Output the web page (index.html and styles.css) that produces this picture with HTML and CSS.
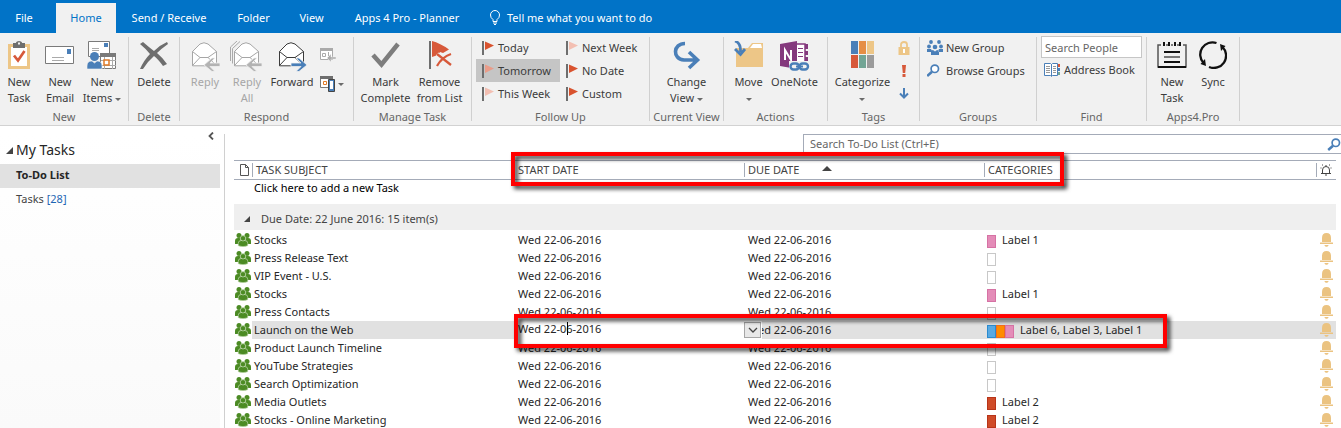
FILE: index.html
```html
<!DOCTYPE html>
<html lang="en">
<head>
<meta charset="utf-8">
<title>Tasks - To-Do List</title>
<link rel="stylesheet" href="styles.css">
</head>
<body>
<svg class="defs" aria-hidden="true">
  <symbol id="people" viewBox="0 0 16 14">
    <g fill="#4c8b24">
      <circle cx="4" cy="2.6" r="2.5"/><circle cx="12" cy="2.6" r="2.5"/>
      <path d="M0 11V8q0-3 3-3h2l2 6zM16 11V8q0-3-3-3h-2l-2 6z"/>
    </g>
    <g fill="#4c8b24" stroke="#d4e6c8" stroke-width=".6">
      <path d="M3.200 12.800V10.500q0-3 3-3h3.600q3 0 3 3v2.300q-4.800 1.800-9.600 0z"/><circle cx="8" cy="5.300" r="2.700"/>
    </g>
  </symbol>
  <symbol id="bell" viewBox="0 0 14 14">
    <path fill="#ebc381" d="M2 9V5Q2 0 6.500 0T11 5v4zM0 9.500h13V11H0zM4.500 12h4v.6L7.300 13.800H5.700L4.500 12.600z"/>
  </symbol>
  <symbol id="flag" viewBox="0 0 12 14">
    <path fill="#6e6e6e" d="M0 0h2v14H0z"/><path fill="currentColor" d="M3 0.500 12 4.600 3 9z"/>
  </symbol>
  <symbol id="glass" viewBox="0 0 14 13">
    <circle cx="8.800" cy="4.800" r="3.700" fill="#fff" stroke="#4a7fb8" stroke-width="1.700"/><path d="M6 7.700 1.200 12" stroke="#4a7fb8" stroke-width="2.500"/>
  </symbol>
  <symbol id="envelope" viewBox="0 0 30 32">
    <path class="paper" stroke="currentColor" d="M2.500 10.500 10 3Q14 .5 18 3l8.500 7.500v14.300H2.500z"/>
    <path fill="none" stroke="currentColor" d="M2.500 10.500 10 16.500h8l8.500-6M2.500 24.500 10 16.500M18 16.500l8.500 8"/>
  </symbol>
</svg>

<nav class="tabs">
  <button class="tab tab-file">File</button>
  <button class="tab tab-home active">Home</button>
  <button class="tab tab-send">Send / Receive</button>
  <button class="tab tab-folder">Folder</button>
  <button class="tab tab-view">View</button>
  <button class="tab tab-apps">Apps 4 Pro - Planner</button>
  <button class="tab tell">
    <svg width="12" height="16" viewBox="0 0 12 16" fill="none" stroke="#fff"><path d="M4 11.500V9.500Q1.500 8 1.500 5a4.500 4.500 0 0 1 9 0q0 3-2.500 4.500v2zM4 13h4M5 14.500h2"/></svg>
    Tell me what you want to do
  </button>
</nav>

<section class="ribbon">
  <div class="group g-new">
    <div class="tools">
      <button class="big w38"><svg width="24" height="30" viewBox="0 0 24 30"><path fill="#edc687" d="M1 3h22v25H1z"/><path fill="#fff" d="M4 6h16v19H4z"/><path fill="#6e6e6e" d="M6 2h3V1.500Q9.500 0 12 0t3 1.500V2h3v5H6z"/><path fill="#f1f1f1" d="M11 1.500h2v2h-2z"/><path d="m7 14.500 4 5L17.500 10" fill="none" stroke="#d7593a" stroke-width="2.700"/></svg><span>New<br>Task</span></button>
      <button class="big w44"><svg width="30" height="30" viewBox="0 0 30 30"><path fill="#fff" stroke="#7a7a7a" d="M.5 5.500h28v17H.5z"/><path fill="#4a7fb8" d="M22 8h4v5h-4z"/><path stroke="#aaa" d="M7 16.500h12M7 19.500h12"/></svg><span>New<br>Email</span></button>
      <button class="big w40"><svg width="30" height="30" viewBox="0 0 30 30"><path fill="#fff" stroke="#7a7a7a" d="M1.500.5h21v15h-21z"/><path fill="#4a7fb8" d="M17 2h4v4h-4z"/><path stroke="#aaa" d="M5 7.500h7M5 9.500h7"/><path fill="#fff" stroke="#7a7a7a" d="M13.500 12.500h15v15h-15z"/><path fill="#7a7a7a" d="M13 12h16v4H13z"/><path stroke="#aaa" d="M14 19.500h15M14 24.500h15M17.500 16v12M25.500 16v12"/><path fill="#fff" stroke="#e07b28" stroke-width="1.500" d="M17 19h5v5h-5z"/><circle cx="7.500" cy="15.500" r="4.500" fill="#4a7fb8"/><path fill="#4a7fb8" stroke="#f1f1f1" stroke-width=".6" d="M0 28v-3q0-5 5-5l2.500 2 2.500-2q5 0 5 5v3z"/></svg><span>New<br>Items <i class="caret"></i></span></button>
    </div>
    <h2>New</h2>
  </div>
  <div class="sep"></div>
  <div class="group g-delete">
    <div class="tools">
      <button class="big w50"><svg width="30" height="30" viewBox="0 0 30 30"><path fill="#6e6e6e" d="M1 3 4 1q7 6 11 9 6-6 13-9l1 2q-7 5-11 9 6 5 10 11l-4 2q-5-7-9-10-6 5-11 13H1q4-9 10-15Q6 7 1 3z"/></svg><span>Delete</span></button>
    </div>
    <h2>Delete</h2>
  </div>
  <div class="sep"></div>
  <div class="group g-respond">
    <div class="tools">
      <button class="big w44 off" disabled><svg width="30" height="32" viewBox="0 0 30 32"><use href="#envelope"/><path fill="#b3b3b3" stroke="#f1f1f1" stroke-width=".8" d="m14 24 8-7h3l-5 5h10v3.500H20l5 5h-3z"/></svg><span>Reply</span></button>
      <button class="big w40 off" disabled><svg width="34" height="32" viewBox="-2 0 34 32"><path d="M.5 22.500V7.500L8 .5M-1.500 20V6L5 0" fill="none" stroke="#aaa"/><use href="#envelope" width="30" height="32"/><path fill="#b3b3b3" stroke="#f1f1f1" stroke-width=".8" d="m14 24 8-7h3l-5 5h10v3.500H20l5 5h-3z"/></svg><span>Reply<br>All</span></button>
      <button class="big w50"><svg width="30" height="32" viewBox="0 0 30 32"><use href="#envelope"/><path fill="#4a7fb8" stroke="#f1f1f1" stroke-width=".8" d="m30 24-8-7h-3l5 5H14v3.500h10l-5 5h3z"/></svg><span>Forward</span></button>
      <div class="minis respond-minis">
        <button class="mini" aria-label="Meeting" disabled><svg width="16" height="14" viewBox="0 0 16 14"><path fill="#fff" stroke="#aaa" d="M.5.5h12v11H.5z"/><path fill="#aaa" d="M0 0h13v3H0z"/><path fill="none" stroke="#aaa" d="M2.500 5.500h3v3h-3zM8.500 4v4"/><path fill="#aaa" stroke="#f1f1f1" stroke-width=".5" d="m7 10 4-4v3h5v2h-5v3z"/></svg></button>
        <button class="mini" aria-label="More respond actions"><svg width="16" height="16" viewBox="0 0 16 16"><path fill="#fff" stroke="#7a7a7a" d="M.5.5h12v11H.5z"/><path fill="#6e6e6e" d="M0 0h13v3H0z"/><path fill="none" stroke="#e07b28" d="M3.500 5.500h3v3h-3z"/><path fill="#4a7fb8" stroke="#444" d="M8.500 3.500h6v12h-6z"/><path fill="#fff" d="M10 5h3v8h-3z"/></svg><i class="caret"></i></button>
      </div>
    </div>
    <h2>Respond</h2>
  </div>
  <div class="sep"></div>
  <div class="group g-manage">
    <div class="tools">
      <button class="big w54"><svg width="30" height="30" viewBox="0 0 30 30"><path d="m2 14 8.500 9.500L27 3" fill="none" stroke="#7d7d7d" stroke-width="4.500"/></svg><span>Mark<br>Complete</span></button>
      <button class="big w54"><svg width="24" height="30" viewBox="0 0 24 30"><path fill="#6e6e6e" d="M1 0h2v28H1z"/><path fill="#d7593a" d="M4 0q8 2 17 8.500L15 12l-3-1-2 3-6 2z"/><path d="m9 13 14 11M23 13Q14 16 9 25" fill="none" stroke="#f1f1f1" stroke-width="4"/><path d="m9 13 14 11M23 13Q14 16 9 25" fill="none" stroke="#d7593a" stroke-width="2.300"/></svg><span>Remove<br>from List</span></button>
    </div>
    <h2>Manage Task</h2>
  </div>
  <div class="sep"></div>
  <div class="group g-follow">
    <div class="tools flags">
      <button class="row"><svg class="red" width="12" height="14"><use href="#flag"/></svg>Today</button>
      <button class="row"><svg class="pale" width="12" height="14"><use href="#flag"/></svg>Next Week</button>
      <button class="row pressed"><svg class="mid" width="12" height="14"><use href="#flag"/></svg>Tomorrow</button>
      <button class="row"><svg class="red" width="12" height="14"><use href="#flag"/></svg>No Date</button>
      <button class="row"><svg class="pale" width="12" height="14"><use href="#flag"/></svg>This Week</button>
      <button class="row"><svg class="red" width="12" height="14"><use href="#flag"/></svg>Custom</button>
    </div>
    <h2>Follow Up</h2>
  </div>
  <div class="sep"></div>
  <div class="group g-view">
    <div class="tools">
      <button class="big w50"><svg width="28" height="30" viewBox="0 0 28 30"><path d="M12 2.500C0 2.500-1 18 11 19h12M16 11l8.500 8-8.500 8" fill="none" stroke="#4a7fb8" stroke-width="3.600"/></svg><span>Change<br>View <i class="caret"></i></span></button>
    </div>
    <h2>Current View</h2>
  </div>
  <div class="sep"></div>
  <div class="group g-actions">
    <div class="tools">
      <button class="big w38"><svg width="30" height="30" viewBox="0 0 30 30"><path fill="#edc687" d="M2 26V7h12l4-5h11v24z"/><path fill="#fff" d="M19 3h8l1 4H16z"/><path d="M1 0q6 2 5.500 11" fill="none" stroke="#4a7fb8" stroke-width="2.800"/><path d="m1 8 5.500 5.500L11 8" fill="none" stroke="#4a7fb8" stroke-width="2.800"/></svg><span>Move<br><i class="caret"></i></span></button>
      <button class="big w54"><svg width="30" height="32" viewBox="0 0 30 32"><path fill="#fff" stroke="#84397d" stroke-width="1.500" d="M16 3h9v20h-9z"/><path fill="#84397d" d="M0 3 17 0v28L0 25zM25 3h3v5h-3zM25 10h3v4h-3zM25 16h3v4h-3z"/><path stroke="#84397d" d="M18 7.500h5M18 11.500h5M18 15.500h5"/><path d="M5 19V9l6 10V9" fill="none" stroke="#fff" stroke-width="2"/><g fill="none"><path d="M9 20h20v10H9z" fill="#f1f1f1"/><rect x="10.500" y="22.500" width="8.500" height="6" rx="3" stroke="#4a7fb8" stroke-width="2.400"/><rect x="19.500" y="22.500" width="8.500" height="6" rx="3" stroke="#4a7fb8" stroke-width="2.400"/><path d="M16 25.500h7" stroke="#4a7fb8" stroke-width="2"/></g></svg><span>OneNote</span></button>
    </div>
    <h2>Actions</h2>
  </div>
  <div class="sep"></div>
  <div class="group g-tags">
    <div class="tools">
      <button class="big w60"><svg width="24" height="28" viewBox="0 0 24 28"><path fill="#4a7fb8" d="M0 0h7v13H0z"/><path fill="#e58e45" d="M8 0h7v13H8z"/><path fill="#edc687" d="M16 0h7v13h-7z"/><path fill="#d7593a" d="M0 14h7v13H0z"/><path fill="#72a595" d="M8 14h7v13H8z"/><path fill="#9b9b9b" d="M16 14h7v13h-7z"/></svg><span>Categorize<br><i class="caret"></i></span></button>
      <div class="minis tag-minis">
        <button class="mini" aria-label="Private"><svg width="12" height="14" viewBox="0 0 12 14"><path fill="#edc687" d="M.5 6h11v8H.5z"/><path d="M3 7V3.500q0-2.500 3-2.500t3 2.500V7" fill="none" stroke="#edc687" stroke-width="1.800"/><path fill="#fff" d="M5 8h2v4H5z"/></svg></button>
        <button class="mini" aria-label="High importance"><svg width="6" height="12" viewBox="0 0 6 12"><path fill="#d7593a" d="M1 0h4l-.8 8H1.800zM1.500 9h3v3h-3z"/></svg></button>
        <button class="mini" aria-label="Low importance"><svg width="10" height="12" viewBox="0 0 10 12"><path d="M5 0v9M1 5.500 5 9.500l4-4" fill="none" stroke="#4a7fb8" stroke-width="2"/></svg></button>
      </div>
    </div>
    <h2>Tags</h2>
  </div>
  <div class="sep"></div>
  <div class="group g-groups">
    <div class="tools stack">
      <button class="row"><svg width="16" height="15" viewBox="0 0 16 15" fill="#4a7fb8"><circle cx="4" cy="2" r="1.900"/><circle cx="12" cy="2" r="1.900"/><circle cx="8" cy="7" r="2.300"/><circle cx="2" cy="6.500" r="1.900"/><circle cx="14" cy="6.500" r="1.900"/><path d="M0 12V9h4l1 2-1 1zM16 12V9h-4l-1 2 1 1zM4 15v-3q0-2 2-2l2 1.500L10 10q2 0 2 2v3z"/></svg>New Group</button>
      <button class="row"><svg width="16" height="13" viewBox="1 0 16 13"><use href="#glass" width="14" height="13"/></svg>Browse Groups</button>
    </div>
    <h2>Groups</h2>
  </div>
  <div class="sep"></div>
  <div class="group g-find">
    <div class="tools stack">
      <input class="people-search" type="text" placeholder="Search People" aria-label="Search People">
      <button class="row"><svg width="16" height="14" viewBox="0 0 16 14"><path fill="#fff" stroke="#4a7fb8" d="M.5.5h6l1 1 1-1h5v12h-5l-1 1-1-1h-6zM7.500 1v12"/><path stroke="#999" d="M2 3.500h4M2 5.500h4M2 7.500h4M2 9.500h4M9 3.500h3M9 5.500h3M9 7.500h3M9 9.500h3"/><path fill="#d7593a" d="M14 1h2v3h-2z"/><path fill="#4a7fb8" d="M14 5h2v3h-2z"/><path fill="#72a595" d="M14 9h2v3h-2z"/></svg>Address Book</button>
    </div>
    <h2>Find</h2>
  </div>
  <div class="sep"></div>
  <div class="group g-apps">
    <div class="tools">
      <button class="big w44"><svg width="30" height="28" viewBox="0 0 30 28"><path d="M4 4H1v22h28V4h-3" fill="none" stroke="#555" stroke-width="1.500"/><path stroke="#111" stroke-width="2" d="M7 1v4M12 1v4M18 1v4M23 1v4M7 11h16M7 21h16M1 26h28"/><path stroke="#555" stroke-width="1.500" d="M9 4h2M14 4h2M20 4h2"/><path stroke="#777" stroke-width="2" d="M7 16h16"/></svg><span>New<br>Task</span></button>
      <button class="big w38"><svg width="28" height="28" viewBox="0 0 28 28"><path d="M4.500 22A12.300 12.300 0 0 1 17.500 2M23.500 6A12.300 12.300 0 0 1 10 26" fill="none" stroke="#111" stroke-width="2.300"/><path d="m21 3 5.500 2-4.500 5zM7 25l-5.500-2L6 18z" fill="#111"/></svg><span>Sync</span></button>
    </div>
    <h2>Apps4.Pro</h2>
  </div>
  <div class="sep"></div>
</section>

<div class="workspace">
  <aside class="sidebar">
    <button class="collapse" aria-label="Minimize folder pane"><svg width="6" height="8" viewBox="0 0 6 8"><path d="M5 .5 1.500 4 5 7.500" fill="none" stroke="#555" stroke-width="1.800"/></svg></button>
    <h1><svg width="7" height="7" viewBox="0 0 7 7"><path fill="#444" d="M7 0v7H0z"/></svg>My Tasks</h1>
    <a class="folder current" href="#todo">To-Do List</a>
    <a class="folder" href="#tasks">Tasks <span>[28]</span></a>
  </aside>

  <main class="list">
    <div class="search"><input type="text" placeholder="Search To-Do List (Ctrl+E)" aria-label="Search To-Do List"><svg width="14" height="13"><use href="#glass"/></svg></div>
    <table class="tasks">
      <colgroup><col class="c-icon"><col class="c-subject"><col class="c-start"><col class="c-due"><col><col class="c-bell"></colgroup>
      <thead>
        <tr>
          <th class="page" aria-label="Icon"><svg width="10" height="12" viewBox="0 0 10 12"><path d="M.5.500h5l3 3v8h-8zM5.500.500v3h3" fill="#fff" stroke="#555"/></svg></th>
          <th>TASK SUBJECT</th><th>START DATE</th><th>DUE DATE <i class="asc"></i></th><th>CATEGORIES</th>
          <th aria-label="Reminder"><svg width="12" height="12" viewBox="0 0 12 12"><path d="M1 9.500h10M2.500 9.500V6q0-3.500 3.500-3.500T9.500 6v3.500M6 2.500V1M5 11h2M1 3.500v1M11 3.500v1M2 1h1M9 1h1" fill="none" stroke="#444"/></svg></th>
        </tr>
      </thead>
      <tbody>
        <tr class="add"><td></td><td colspan="5">Click here to add a new Task</td></tr>
        <tr class="band"><td colspan="6"><svg width="6" height="6" viewBox="0 0 7 7"><path fill="#444" d="M7 0v7H0z"/></svg>Due Date: 22 June 2016: 15 item(s)</td></tr>
        <tr><td><svg class="who"><use href="#people"/></svg></td><td>Stocks</td><td>Wed 22-06-2016</td><td>Wed 22-06-2016</td><td><i class="chip pink"></i><span>Label 1</span></td><td><svg class="ring"><use href="#bell"/></svg></td></tr>
        <tr><td><svg class="who"><use href="#people"/></svg></td><td>Press Release Text</td><td>Wed 22-06-2016</td><td>Wed 22-06-2016</td><td><i class="chip"></i></td><td><svg class="ring"><use href="#bell"/></svg></td></tr>
        <tr><td><svg class="who"><use href="#people"/></svg></td><td>VIP Event - U.S.</td><td>Wed 22-06-2016</td><td>Wed 22-06-2016</td><td><i class="chip"></i></td><td><svg class="ring"><use href="#bell"/></svg></td></tr>
        <tr><td><svg class="who"><use href="#people"/></svg></td><td>Stocks</td><td>Wed 22-06-2016</td><td>Wed 22-06-2016</td><td><i class="chip pink"></i><span>Label 1</span></td><td><svg class="ring"><use href="#bell"/></svg></td></tr>
        <tr><td><svg class="who"><use href="#people"/></svg></td><td>Press Contacts</td><td>Wed 22-06-2016</td><td>Wed 22-06-2016</td><td><i class="chip"></i></td><td><svg class="ring"><use href="#bell"/></svg></td></tr>
        <tr class="selected"><td class="plain"><svg class="who"><use href="#people"/></svg></td><td>Launch on the Web</td><td class="editing"><input type="text" value="Wed 22-06-2016" aria-label="Start date"><i class="cursor"></i><button aria-label="Pick a date"><svg width="10" height="6" viewBox="0 0 10 6"><path d="m1 1 4 4 4-4" fill="none" stroke="#444" stroke-width="1.300"/></svg></button></td><td>Wed 22-06-2016</td><td><i class="chip blue"></i><i class="chip orange"></i><i class="chip pink"></i><span>Label 6, Label 3, Label 1</span></td><td><svg class="ring"><use href="#bell"/></svg></td></tr>
        <tr><td><svg class="who"><use href="#people"/></svg></td><td>Product Launch Timeline</td><td>Wed 22-06-2016</td><td>Wed 22-06-2016</td><td><i class="chip"></i></td><td><svg class="ring"><use href="#bell"/></svg></td></tr>
        <tr><td><svg class="who"><use href="#people"/></svg></td><td>YouTube Strategies</td><td>Wed 22-06-2016</td><td>Wed 22-06-2016</td><td><i class="chip"></i></td><td><svg class="ring"><use href="#bell"/></svg></td></tr>
        <tr><td><svg class="who"><use href="#people"/></svg></td><td>Search Optimization</td><td>Wed 22-06-2016</td><td>Wed 22-06-2016</td><td><i class="chip"></i></td><td><svg class="ring"><use href="#bell"/></svg></td></tr>
        <tr><td><svg class="who"><use href="#people"/></svg></td><td>Media Outlets</td><td>Wed 22-06-2016</td><td>Wed 22-06-2016</td><td><i class="chip brick"></i><span>Label 2</span></td><td><svg class="ring"><use href="#bell"/></svg></td></tr>
        <tr><td><svg class="who"><use href="#people"/></svg></td><td>Stocks - Online Marketing</td><td>Wed 22-06-2016</td><td>Wed 22-06-2016</td><td><i class="chip brick"></i><span>Label 2</span></td><td><svg class="ring"><use href="#bell"/></svg></td></tr>
      </tbody>
    </table>
    <div class="callout callout-columns"></div>
    <div class="callout callout-row"></div>
  </main>
</div>
</body>
</html>
```
FILE: styles.css
```css
* { box-sizing: border-box; }
body {
  margin: 0;
  height: 100vh;
  overflow: hidden;
  display: flex;
  flex-direction: column;
  background: #fff;
  color: #262626;
  font: 11px/16px "Noto Sans", "Open Sans", sans-serif;
  white-space: nowrap;
}
button, input { font: inherit; color: inherit; border: 0; padding: 0; margin: 0; background: none; }
svg { flex: none; display: block; }
.defs { position: absolute; width: 0; height: 0; }
h1, h2 { margin: 0; font-weight: normal; }

/* Tabs */
.tabs { display: flex; background: #0173c7; padding-top: 3px; flex: none; }
.tab { height: 30px; color: #fff; }
.tab-file { width: 48px; margin-right: 8px; }
.tab-home { width: 60px; }
.tab-send { width: 106px; }
.tab-folder { width: 63px; }
.tab-view { width: 53px; }
.tab-apps { width: 138px; }
.active { background: #f1f1f1; color: #0173c7; }
.tell { display: flex; align-items: center; gap: 6px; padding-left: 13px; }

/* Ribbon */
.ribbon { display: flex; flex: none; height: 93px; background: #f1f1f1; border-bottom: 1px solid #d2d2d2; padding-top: 3px; }
.sep { width: 1px; height: 84px; margin-top: 1px; background: #d0d0d0; flex: none; }
.group { flex: none; display: flex; flex-direction: column; justify-content: space-between; }
.group h2 { font-size: 11px; line-height: 16px; text-align: center; color: #666; }
.tools { display: flex; justify-content: center; }
.g-new { width: 128px; }
.g-new .tools { justify-content: flex-start; }
.g-delete { width: 50px; }
.g-respond { width: 173px; }
.g-respond .tools { justify-content: flex-start; padding-left: 3px; }
.g-manage { width: 117px; }
.g-follow { width: 177px; }
.g-view { width: 73px; }
.g-actions { width: 103px; }
.g-tags { width: 91px; }
.g-groups { width: 116px; }
.g-find { width: 109px; }
.g-apps { width: 92px; }
.g-apps .tools { justify-content: flex-start; padding-left: 3px; }
.big { display: flex; flex-direction: column; align-items: center; height: 70px; padding-top: 5px; color: #3b3b3b; }
.big svg { margin-bottom: auto; }
.big span { height: 32px; display: block; text-align: center; }
.w38 { width: 38px; } .w40 { width: 40px; } .w44 { width: 44px; } .w50 { width: 50px; } .w54 { width: 54px; } .w60 { width: 60px; }
.paper { fill: #fff; }
.off { color: #a6a6a6; }
.off .paper { fill: #f5f0f5; }
.caret { display: inline-block; border: 3px solid transparent; border-top-color: #6b6b6b; border-bottom: 0; vertical-align: middle; }
.minis { display: flex; flex-direction: column; }
.mini { display: flex; align-items: center; gap: 2px; }
.respond-minis { padding: 12px 0 0 3px; gap: 14px; }
.tag-minis { width: 22px; }
.tag-minis .mini { height: 23px; justify-content: center; }
.row { display: flex; align-items: center; height: 23px; gap: 4px; color: #3b3b3b; text-align: left; }
.flags { display: grid; grid-template-columns: 84px 84px; justify-content: start; padding-left: 4px; }
.flags .row { padding-left: 6px; }
.pressed { background: #c5c5c5; }
.red { color: #d9532f; } .pale { color: #f3bfb2; } .mid { color: #ea9c89; }
.stack { flex-direction: column; align-items: flex-start; }
.g-groups .tools { padding-left: 7px; }
.g-groups .row { gap: 3px; }
.g-find .tools { padding: 0 4px; }
.g-find .row { padding-left: 3px; }
.people-search { width: 100%; height: 22px; background: #fff; border: 1px solid #c6c6c6; padding-left: 3px; }
input::placeholder { color: #666; opacity: 1; }

/* Folder pane */
.workspace { display: flex; flex: 1; min-height: 0; padding-top: 8px; }
.sidebar { width: 220px; flex: none; display: flex; flex-direction: column; background: linear-gradient(#fff, #fafafa); }
.collapse { height: 6px; align-self: flex-end; margin-right: 6px; display: flex; align-items: flex-end; }
.sidebar h1 { display: flex; align-items: center; gap: 3px; padding: 0 0 4px 6px; font-size: 14px; line-height: 20px; }
.folder { display: block; line-height: 22px; padding: 0 0 2px 16px; color: #444; text-decoration: none; }
.folder span { color: #1e66b4; }
.current { background: #e1e1e1; font-weight: bold; color: #262626; }

/* Task list */
.list { position: relative; flex: 1; min-width: 0; margin-left: 4px; border-left: 1px solid #d0d0d0; padding-left: 9px; }
.search { display: flex; align-items: center; height: 20px; margin-left: 569px; border: 1px solid #a4abb8; border-right: 0; padding-left: 6px; }
.search input { flex: 1; min-width: 0; }
.tasks { table-layout: fixed; border-collapse: separate; border-spacing: 0; width: calc(100% - 5px); margin-top: 6px; }
.c-icon { width: 18px; } .c-subject { width: 262px; } .c-start { width: 230px; } .c-due { width: 240px; } .c-bell { width: 20px; }
th, td { padding: 0 0 0 4px; text-align: left; font-weight: normal; height: 18px; }
th { height: 20px; color: #444; border: solid #a4abb8; border-width: 1px 0; background: linear-gradient(#a4abb8, #a4abb8) left center / 1px 14px no-repeat; }
.page { background: none; padding-left: 6px; }
.asc { display: inline-block; border: 5px solid transparent; border-bottom-color: #444; border-top: 0; margin-left: 20px; vertical-align: 3px; }
td:first-child { padding-left: 1px; }
td:nth-child(2) { padding-left: 2px; }
td:nth-child(5) { padding-left: 3px; }
.add td { height: 24px; color: #000; padding-bottom: 8px; }
.band td:first-child { height: 27px; padding: 2px 0 0 10px; background: #efefef linear-gradient(#fff, #fff) bottom / 100% 1px no-repeat; color: #444; }
.band svg { display: inline-block; margin-right: 11px; vertical-align: 1px; }
.who { width: 16px; height: 14px; }
.ring { width: 14px; height: 14px; }
.chip { display: inline-block; width: 9px; height: 13px; border: 1px solid #c8c8c8; background: #fff; vertical-align: middle; }
.chip + span { margin-left: 6px; }
.pink { background: #e48cb8; border-color: #d672a4; }
.blue { background: #58a9e2; border-color: #2b8bcf; }
.orange { background: #ff8c00; border-color: #f26d1c; }
.brick { background: #cf4b28; border-color: #b83419; }
.selected { background: #e1e1e1; }
.selected .plain { background: #fff; }
.editing { position: relative; background: #fff; }
.editing input { display: block; width: 200px; height: 16px; margin-bottom: 2px; }
.editing .cursor { position: absolute; left: 53px; top: 1px; width: 1px; height: 13px; background: #000; }
.editing button { position: absolute; right: -17px; top: 1px; width: 17px; height: 16px; display: flex; align-items: center; justify-content: center; background: #e8e8e8; border: 1px solid #a6a6a6; outline: 1px solid #fff; }

/* Highlight frames laid over the list */
.callout { position: absolute; border: 4px solid #f00; filter: drop-shadow(3px 3px 2px rgba(0, 0, 0, 0.8)); pointer-events: none; }
.callout-columns { left: 286px; top: 18px; width: 553px; height: 34px; }
.callout-row { left: 289px; top: 180px; width: 653px; height: 34px; }
```
